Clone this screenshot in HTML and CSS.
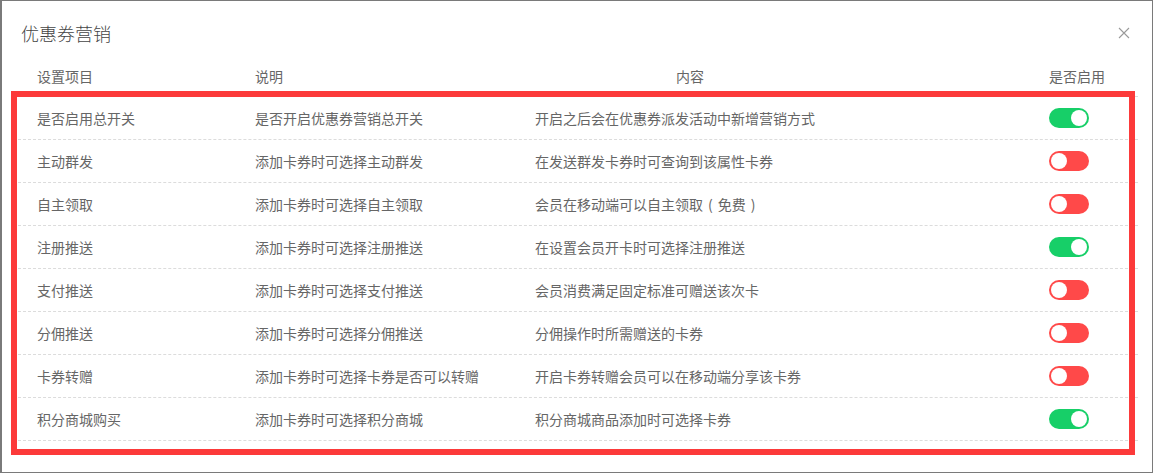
FILE: index.html
```html
<!DOCTYPE html>
<html lang="zh-CN">
<head>
  <meta charset="UTF-8" />
  <meta name="viewport" content="width=device-width, initial-scale=1.0"/>
  <title>优惠券营销</title>
  <link rel="stylesheet" href="styles.css">
</head>
<body>
  <div class="dialog">
    <div class="dialog-header">
      <h2>优惠券营销</h2>
      <svg class="close" width="12" height="12" viewBox="0 0 12 12">
        <path d="M1 1L11 11M11 1L1 11" stroke="#9a9a9a" stroke-width="1.1" fill="none"/>
      </svg>
    </div>

    <div class="dialog-body">
      <div class="row head">
        <div>设置项目</div>
        <div>说明</div>
        <div class="center">内容</div>
        <div>是否启用</div>
      </div>

      <div class="row">
        <div>是否启用总开关</div>
        <div>是否开启优惠券营销总开关</div>
        <div>开启之后会在优惠券派发活动中新增营销方式</div>
        <div><span class="switch on"></span></div>
      </div>
      <div class="row">
        <div>主动群发</div>
        <div>添加卡券时可选择主动群发</div>
        <div>在发送群发卡券时可查询到该属性卡券</div>
        <div><span class="switch"></span></div>
      </div>
      <div class="row">
        <div>自主领取</div>
        <div>添加卡券时可选择自主领取</div>
        <div>会员在移动端可以自主领取<span class="paren">(</span>免费<span class="paren">)</span></div>
        <div><span class="switch"></span></div>
      </div>
      <div class="row">
        <div>注册推送</div>
        <div>添加卡券时可选择注册推送</div>
        <div>在设置会员开卡时可选择注册推送</div>
        <div><span class="switch on"></span></div>
      </div>
      <div class="row">
        <div>支付推送</div>
        <div>添加卡券时可选择支付推送</div>
        <div>会员消费满足固定标准可赠送该次卡</div>
        <div><span class="switch"></span></div>
      </div>
      <div class="row">
        <div>分佣推送</div>
        <div>添加卡券时可选择分佣推送</div>
        <div>分佣操作时所需赠送的卡券</div>
        <div><span class="switch"></span></div>
      </div>
      <div class="row">
        <div>卡券转赠</div>
        <div>添加卡券时可选择卡券是否可以转赠</div>
        <div>开启卡券转赠会员可以在移动端分享该卡券</div>
        <div><span class="switch"></span></div>
      </div>
      <div class="row">
        <div>积分商城购买</div>
        <div>添加卡券时可选择积分商城</div>
        <div>积分商城商品添加时可选择卡券</div>
        <div><span class="switch on"></span></div>
      </div>
    </div>

    <!-- annotation box drawn over the settings rows -->
    <div class="highlight"></div>
  </div>
</body>
</html>
```

FILE: styles.css
```css
body {
  margin: 0;
  background: #fff;
  font-family: "Noto Sans CJK SC", sans-serif;
  color: #666;
}

.dialog {
  position: relative;
  width: 1153px;
  height: 473px;
  box-sizing: border-box;
  border: 1px solid #7a7a7a;
  border-left-width: 2px;
  background: #fff;
}

.dialog-header {
  display: flex;
  justify-content: space-between;
  align-items: center;
  padding: 19px 22px 0 19px;
}

.dialog-header h2 {
  margin: 0;
  font-size: 18px;
  line-height: 26px;
  font-weight: 300;
  color: #444;
}

.close {
  display: block;
}

.dialog-body {
  margin-top: 19px;
  padding: 0 14px 0 16px;
}

.row {
  display: grid;
  grid-template-columns: 218px 280px 514px 1fr;
  align-items: center;
  height: 43px;
  box-sizing: border-box;
  border-bottom: 1px dashed #dcdcdc;
  font-size: 14px;
}

.row > div {
  padding-left: 19px;
  white-space: nowrap;
}

.row.head {
  height: 32px;
  align-items: start;
  line-height: 22px;
}

.row.head .center {
  padding-left: 160px;
}

.paren {
  margin: 0 5px;
}

.switch {
  display: block;
  position: relative;
  width: 40px;
  height: 20px;
  border-radius: 10px;
  background: #ff4949;
}

.switch::after {
  content: "";
  position: absolute;
  top: 2px;
  left: 2px;
  width: 16px;
  height: 16px;
  border-radius: 50%;
  background: #fff;
}

.switch.on {
  background: #17cf68;
}

.switch.on::after {
  left: 22px;
}

.highlight {
  position: absolute;
  left: 9px;
  top: 90px;
  width: 1124px;
  height: 364px;
  box-sizing: border-box;
  border: 6px solid #fc3a3a;
}
```
